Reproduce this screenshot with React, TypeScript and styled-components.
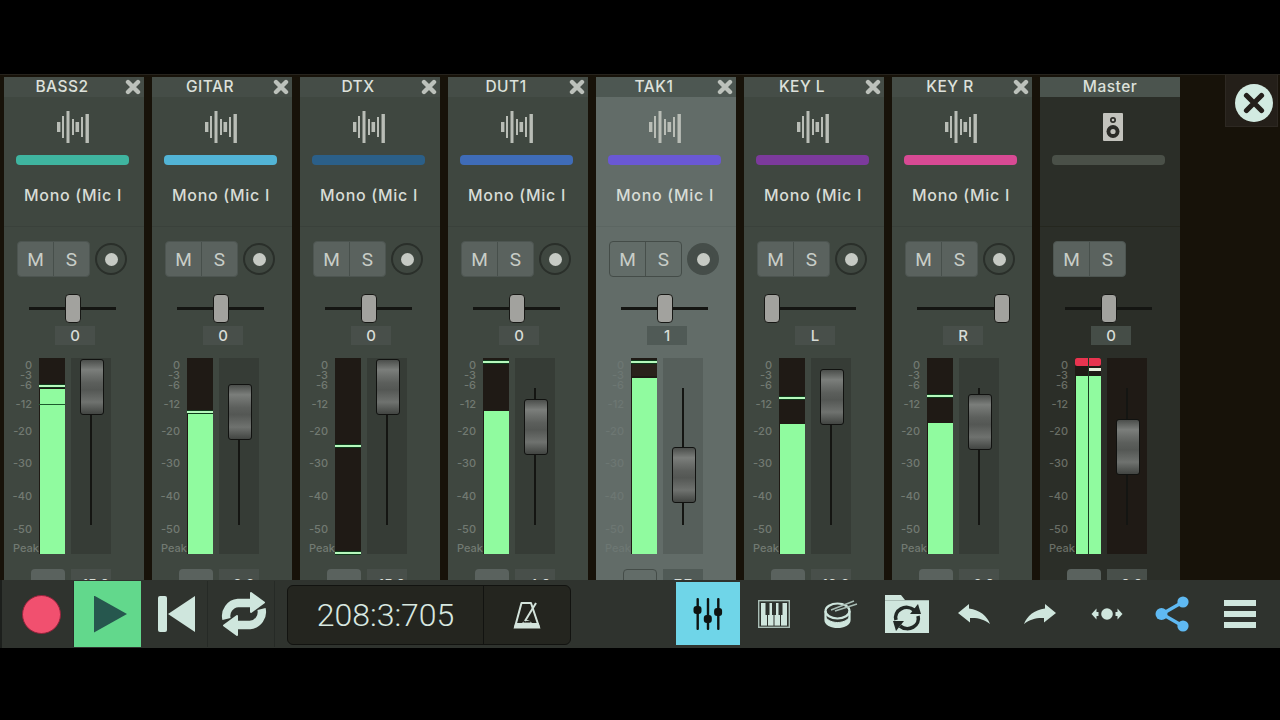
import styled, { createGlobalStyle } from "styled-components";

const GlobalStyle = createGlobalStyle`
  html, body {
    margin: 0;
    padding: 0;
    background: #000;
  }
  * {
    box-sizing: border-box;
  }
`;

type Track = {
  name: string;
  color: string;
  pan: number;
  panText: string;
  level: number;
  peaks: number[];
  thin?: number;
  fader: number;
  gain: string;
  selected?: boolean;
  master?: boolean;
  dark?: boolean;
};

// all meter values are px from the top of the 196px meter
const tracks: Track[] = [
  { name: "BASS2", color: "#3fb5a0", pan: 36, panText: "0", level: 31, peaks: [26], thin: 46, fader: 1, gain: "+15.0" },
  { name: "GITAR", color: "#52b4d6", pan: 36, panText: "0", level: 56, peaks: [52], fader: 26, gain: "+8.6" },
  { name: "DTX", color: "#2b5f88", pan: 36, panText: "0", level: 196, peaks: [86, 193], fader: 1, gain: "+15.0", dark: true },
  { name: "DUT1", color: "#3f6cb8", pan: 36, panText: "0", level: 53, peaks: [2], fader: 41, gain: "+4.0" },
  { name: "TAK1", color: "#6a58d4", pan: 36, panText: "1", level: 20, peaks: [2], fader: 89, gain: "7.7", selected: true },
  { name: "KEY L", color: "#7c3a9c", pan: -5, panText: "L", level: 66, peaks: [38], fader: 11, gain: "+12.6" },
  { name: "KEY R", color: "#d84a94", pan: 77, panText: "R", level: 65, peaks: [36], fader: 36, gain: "+6.0" },
  { name: "Master", color: "#4a5048", pan: 36, panText: "0", level: 18, peaks: [], fader: 61, gain: "+0.0", master: true },
];

const scale = [
  { text: "0", y: 7 },
  { text: "-3", y: 17 },
  { text: "-6", y: 27 },
  { text: "-12", y: 46 },
  { text: "-20", y: 73 },
  { text: "-30", y: 105 },
  { text: "-40", y: 138 },
  { text: "-50", y: 171 },
];

const WaveIcon = () => (
  <svg width="34" height="32" viewBox="0 0 34 32" fill="#b9bdb6">
    <rect x="1" y="11" width="3.4" height="10" />
    <rect x="6" y="5" width="2" height="22" />
    <rect x="10.5" y="0" width="3" height="32" />
    <rect x="16" y="8" width="2" height="16" />
    <rect x="19.5" y="11" width="3.6" height="10" />
    <rect x="25" y="6" width="2" height="20" />
    <rect x="29.5" y="3" width="3.4" height="29" />
  </svg>
);

const SpeakerIcon = () => (
  <svg width="20" height="28" viewBox="0 0 20 28">
    <rect width="20" height="28" rx="1" fill="#c3c3bd" />
    <circle cx="10" cy="7" r="3" fill="#2b2b27" />
    <circle cx="10" cy="7" r="1.3" fill="#c3c3bd" />
    <circle cx="10" cy="18.5" r="6.5" fill="#2b2b27" />
    <circle cx="10" cy="18.5" r="2.6" fill="#c3c3bd" />
  </svg>
);

const CloseIcon = () => (
  <svg width="16" height="16" viewBox="0 0 16 16">
    <path d="M3 3 L13 13 M13 3 L3 13" stroke="#bcc1bb" strokeWidth="4.4" strokeLinecap="round" />
  </svg>
);

const LoopIcon = () => (
  <svg width="46" height="44" viewBox="0 0 46 44" fill="#cfe6dd">
    <path d="M5.5 27 A13 13 0 0 1 17 11 H31" fill="none" stroke="#cfe6dd" strokeWidth="8.4" />
    <path d="M30 1 L43 10.5 L30 20 Z" stroke="#cfe6dd" strokeWidth="2" strokeLinejoin="round" />
    <path d="M40.5 17 A13 13 0 0 1 29 33 H15" fill="none" stroke="#cfe6dd" strokeWidth="8.4" />
    <path d="M16 24 L3 33.5 L16 43 Z" stroke="#cfe6dd" strokeWidth="2" strokeLinejoin="round" />
  </svg>
);

const MetronomeIcon = () => (
  <svg width="30" height="27" viewBox="0 0 30 27">
    <path d="M9.5 1 H19 L27 25 H3 Z" fill="none" stroke="#d4e4dc" strokeWidth="2" strokeLinejoin="round" />
    <path d="M3.5 21 H26.5 L28.5 26.5 H1.5 Z" fill="#d4e4dc" />
    <path d="M10 21 Q15 15 20 21 Z" fill="#d4e4dc" />
    <rect x="11.5" y="19" width="7" height="1.6" fill="#24251f" />
    <path d="M13 19 L24 1" stroke="#d4e4dc" strokeWidth="2" />
  </svg>
);

const MixerIcon = () => (
  <svg width="30" height="32" viewBox="0 0 30 32" fill="#0e1412">
    <rect x="3.5" y="0" width="2.4" height="32" rx="1" />
    <rect x="13.8" y="0" width="2.4" height="32" rx="1" />
    <rect x="24.1" y="0" width="2.4" height="32" rx="1" />
    <rect x="0.5" y="8" width="8" height="8" rx="3" />
    <rect x="10.8" y="17" width="8" height="8" rx="3" />
    <rect x="21.1" y="10" width="8" height="8" rx="3" />
  </svg>
);

const PianoIcon = () => (
  <svg width="32" height="28" viewBox="0 0 32 28">
    <rect x="0.7" y="0.7" width="30.6" height="26.6" fill="#2e332e" stroke="#a9bdb5" strokeWidth="1.4" />
    <rect x="3" y="3" width="26" height="22.6" fill="#cfe6dd" />
    <path d="M9.5 15 V26 M16 15 V26 M22.5 15 V26" stroke="#2e332e" strokeWidth="1" />
    <path d="M7.5 3 H11.5 V15 H7.5 Z M14 3 H18 V15 H14 Z M20.5 3 H24.5 V15 H20.5 Z" fill="#2e332e" />
  </svg>
);

const DrumIcon = () => (
  <svg width="34" height="28" viewBox="0 0 34 28" fill="none" stroke="#cfe6dd">
    <ellipse cx="13.5" cy="11" rx="12" ry="7.5" strokeWidth="2.2" />
    <path d="M1.5 11 V20 C1.5 24 7 27 13.5 27 C20 27 25.5 24 25.5 20 V11" strokeWidth="2.2" />
    <path d="M1.5 17 C4 21 9 22.5 13.5 22.5 C18 22.5 23 21 25.5 17 V21 C24 25 19 27 13.5 27 C8 27 3 25 1.5 21 Z" fill="#cfe6dd" strokeWidth="1" />
    <path d="M7 10 L30 1 M11 11 L33 4" stroke="#a9bdb5" strokeWidth="1.5" />
  </svg>
);

const FolderSyncIcon = () => (
  <svg width="44" height="38" viewBox="0 0 44 38">
    <path d="M0 0 H16 L20 5 H44 V38 H0 Z" fill="#cfe6dd" />
    <path d="M0 5 H44 V6 H0 Z" fill="#a9bdb5" />
    <path d="M11 25 A11 10 0 0 1 29 15" fill="none" stroke="#222926" strokeWidth="3.6" />
    <path d="M25 19 L36 19 L33 9 Z" fill="#222926" />
    <path d="M33 21 A11 10 0 0 1 15 31" fill="none" stroke="#222926" strokeWidth="3.6" />
    <path d="M19 26 L8 26 L11 36 Z" fill="#222926" />
  </svg>
);

const ReplyArrow = ({ flip }: { flip?: boolean }) => (
  <svg width="34" height="22" viewBox="0 0 34 22" fill="#cfe6dd">
    <g transform={flip ? "translate(34 0) scale(-1 1)" : undefined}>
      <path d="M1 10 L12 1 V5.5 C23 7 30 13 33 21 C27 16 20 14.5 13 15 V19.5 Z" />
    </g>
  </svg>
);

const MoveIcon = () => (
  <svg width="32" height="16" viewBox="0 0 32 16" fill="#cfe6dd">
    <circle cx="16" cy="8" r="5.8" />
    <path d="M0.5 8 L5.5 2.5 V13.5 Z" />
    <path d="M31.5 8 L26.5 2.5 V13.5 Z" />
    <rect x="4.5" y="6" width="3" height="4" />
    <rect x="24.5" y="6" width="3" height="4" />
  </svg>
);

const ShareIcon = () => (
  <svg width="36" height="36" viewBox="0 0 36 36" fill="#5fb9f2">
    <path d="M27 6.5 L7 18 L27 29.5" fill="none" stroke="#5fb9f2" strokeWidth="3.4" />
    <circle cx="28" cy="6" r="5.6" />
    <circle cx="6.5" cy="18" r="6" />
    <circle cx="28" cy="30" r="5.6" />
  </svg>
);

const StripView = ({ track }: { track: Track }) => (
  <Strip $selected={track.selected} $master={track.master}>
    <TopPart $selected={track.selected} $master={track.master}>
      <Header $selected={track.selected} $master={track.master}>
        <Name $master={track.master}>{track.name}</Name>
        {!track.master && (
          <CloseSpot>
            <CloseIcon />
          </CloseSpot>
        )}
      </Header>
      <TypeIcon $master={track.master}>{track.master ? <SpeakerIcon /> : <WaveIcon />}</TypeIcon>
      <ColorBar $color={track.color} />
      {!track.master && <InputName>Mono (Mic I</InputName>}
    </TopPart>

    <ButtonRow>
      <MuteGroup $selected={track.selected}>
        <MuteButton>M</MuteButton>
        <MuteButton>S</MuteButton>
      </MuteGroup>
      {!track.master && (
        <RecCircle $selected={track.selected}>
          <RecDot />
        </RecCircle>
      )}
    </ButtonRow>

    <PanRow>
      <PanTrack>
        <PanHandle $left={track.pan} />
      </PanTrack>
    </PanRow>
    <PanValue $selected={track.selected} $master={track.master}>
      {track.panText}
    </PanValue>

    <MeterRow>
      <Scale $selected={track.selected} $master={track.master}>
        {scale.map((s) => (
          <ScaleText key={s.text} $y={s.y}>
            {s.text}
          </ScaleText>
        ))}
        <PeakText>Peak</PeakText>
      </Scale>
      {track.master ? (
        <Meter>
          <MasterClip />
          <MasterPeak />
          <Fill $top={track.level} />
          <MeterSplit />
        </Meter>
      ) : (
        <Meter>
          <Fill $top={track.level} $hidden={track.dark} />
          {track.selected && <DarkBand />}
          {track.peaks.map((p) => (
            <PeakLine key={p} $y={p} />
          ))}
          {track.thin && <ThinLine $y={track.thin} />}
        </Meter>
      )}
      <FaderWell $selected={track.selected} $master={track.master}>
        <FaderLine />
        <FaderHandle $top={track.fader} />
      </FaderWell>
    </MeterRow>

    <GainRow>
      <GainButton $selected={track.selected}>o</GainButton>
      <GainValue $selected={track.selected}>{track.gain}</GainValue>
    </GainRow>
  </Strip>
);

const App = (): JSX.Element => {
  return (
    <>
      <GlobalStyle />
      <Page>
        <Mixer>
          {tracks.map((t) => (
            <StripView key={t.name} track={t} />
          ))}
          <HideButton>
            <HideCircle>
              <svg width="22" height="22" viewBox="0 0 22 22">
                <path d="M3.5 3.5 L18.5 18.5 M18.5 3.5 L3.5 18.5" stroke="#241f1b" strokeWidth="5.2" strokeLinecap="round" />
              </svg>
            </HideCircle>
          </HideButton>
        </Mixer>

        <BottomBar>
          <TransportSlot $shift={3}>
            <RecordDot />
          </TransportSlot>
          <TransportSlot $active>
            <PlayShape />
          </TransportSlot>
          <TransportSlot $shift={5}>
            <SkipBar />
            <SkipShape />
          </TransportSlot>
          <TransportSlot $shift={5}>
            <LoopIcon />
          </TransportSlot>

          <TimeBox>
            <TimeText>208:3:705</TimeText>
            <MetronomeSpot>
              <MetronomeIcon />
            </MetronomeSpot>
          </TimeBox>

          <ToolGroup>
            <ToolSlot $active>
              <MixerIcon />
            </ToolSlot>
            <ToolSlot>
              <PianoIcon />
            </ToolSlot>
            <ToolSlot>
              <DrumIcon />
            </ToolSlot>
            <ToolSlot>
              <FolderSyncIcon />
            </ToolSlot>
            <ToolSlot>
              <ReplyArrow />
            </ToolSlot>
            <ToolSlot>
              <ReplyArrow flip />
            </ToolSlot>
            <ToolSlot>
              <MoveIcon />
            </ToolSlot>
            <ToolSlot>
              <ShareIcon />
            </ToolSlot>
            <ToolSlot>
              <Burger>
                <BurgerLine />
                <BurgerLine />
                <BurgerLine />
              </Burger>
            </ToolSlot>
          </ToolGroup>
        </BottomBar>
      </Page>
    </>
  );
};

const Page = styled.div`
  width: 1280px;
  height: 720px;
  padding-top: 74px;
  background: #000;
  overflow: hidden;
  font-family: "Inter", "Liberation Sans", sans-serif;
`;

const Mixer = styled.div`
  position: relative;
  height: 506px;
  display: flex;
  align-items: flex-start;
  gap: 8px;
  padding: 2px 0 0 4px;
  background: #171209;
  border-top: 1px solid #26231d;
  overflow: hidden;
`;

const Strip = styled.div<{ $selected?: boolean; $master?: boolean }>`
  width: 140px;
  flex-shrink: 0;
  display: flex;
  flex-direction: column;
  background: ${(p) => (p.$selected ? "#626c68" : p.$master ? "#2b2e28" : "#3f4740")};
`;

const TopPart = styled.div<{ $selected?: boolean; $master?: boolean }>`
  height: 150px;
  flex-shrink: 0;
  display: flex;
  flex-direction: column;
  border-bottom: 1px solid
    ${(p) => (p.$selected ? "#5c6662" : p.$master ? "#25271f" : "#3a413b")};
`;

const Header = styled.div<{ $selected?: boolean; $master?: boolean }>`
  position: relative;
  height: 20px;
  flex-shrink: 0;
  display: flex;
  align-items: center;
  justify-content: ${(p) => (p.$master ? "center" : "flex-start")};
  background: ${(p) => (p.$selected ? "#4d5752" : p.$master ? "#4b544e" : "#454d47")};
`;

const Name = styled.div<{ $master?: boolean }>`
  width: ${(p) => (p.$master ? "auto" : "116px")};
  margin-top: -2px;
  text-align: center;
  font-size: 15.5px;
  font-weight: 500;
  letter-spacing: 0.5px;
  color: #dde1db;
`;

const CloseSpot = styled.div`
  position: absolute;
  right: 3px;
  top: 2px;
  width: 16px;
  height: 16px;
  display: flex;
`;

const TypeIcon = styled.div<{ $master?: boolean }>`
  height: 58px;
  flex-shrink: 0;
  display: flex;
  align-items: center;
  justify-content: center;
  padding: 2px ${(p) => (p.$master ? "0" : "2px")} 0 ${(p) => (p.$master ? "6px" : "0")};
`;

const ColorBar = styled.div<{ $color: string }>`
  width: 113px;
  height: 10px;
  margin-left: 12px;
  flex-shrink: 0;
  border-radius: 4px;
  background: ${(p) => p.$color};
`;

const InputName = styled.div`
  margin-top: 20px;
  padding-left: 20px;
  font-size: 16px;
  font-weight: 500;
  line-height: 20px;
  letter-spacing: 0.7px;
  white-space: nowrap;
  color: #d8dcd6;
`;

const ButtonRow = styled.div`
  height: 36px;
  margin-top: 14px;
  padding-left: 13px;
  display: flex;
  align-items: center;
  gap: 5px;
`;

const MuteGroup = styled.div<{ $selected?: boolean }>`
  width: 73px;
  height: 36px;
  display: flex;
  border-radius: 4px;
  overflow: hidden;
  background: ${(p) => (p.$selected ? "#626c68" : "#5a625e")};
  border: 1px solid ${(p) => (p.$selected ? "#444c48" : "#4d5551")};
`;

const MuteButton = styled.div`
  flex: 1;
  display: flex;
  align-items: center;
  justify-content: center;
  font-family: "Roboto", "Liberation Sans", sans-serif;
  font-size: 19px;
  font-weight: 400;
  color: #c8cdc7;
  & + & {
    border-left: 1px solid #474f4b;
  }
`;

const RecCircle = styled.div<{ $selected?: boolean }>`
  width: 32px;
  height: 32px;
  display: flex;
  align-items: center;
  justify-content: center;
  border-radius: 50%;
  border: ${(p) => (p.$selected ? "6px solid #454d49" : "2px solid #2a2f2a")};
  background: ${(p) => (p.$selected ? "#454d49" : "#3f4740")};
`;

const RecDot = styled.div`
  width: 13px;
  height: 13px;
  border-radius: 50%;
  background: #c6cac4;
`;

const PanRow = styled.div`
  height: 29px;
  margin-top: 17px;
  padding-left: 25px;
  display: flex;
  align-items: center;
`;

const PanTrack = styled.div`
  position: relative;
  width: 87px;
  height: 3px;
  background: #141512;
`;

const PanHandle = styled.div<{ $left: number }>`
  position: absolute;
  left: ${(p) => p.$left}px;
  top: -13px;
  width: 16px;
  height: 29px;
  border-radius: 4px;
  border: 1px solid #171815;
  background: #a2a29e;
`;

const PanValue = styled.div<{ $selected?: boolean; $master?: boolean }>`
  width: 40px;
  height: 19px;
  margin: 3px 0 0 51px;
  display: flex;
  align-items: center;
  justify-content: center;
  font-size: 15px;
  font-weight: 500;
  color: #d8dcd6;
  background: ${(p) => (p.$selected ? "#505a56" : p.$master ? "#454d47" : "#484f4a")};
`;

const MeterRow = styled.div`
  height: 196px;
  margin-top: 13px;
  display: flex;
  flex-shrink: 0;
`;

const Scale = styled.div<{ $selected?: boolean; $master?: boolean }>`
  position: relative;
  width: 35px;
  flex-shrink: 0;
  color: ${(p) => (p.$selected ? "#6d7773" : p.$master ? "#6a6e66" : "#727a72")};
`;

const ScaleText = styled.div<{ $y: number }>`
  position: absolute;
  right: 7px;
  top: ${(p) => p.$y - 5}px;
  font-size: 11px;
  line-height: 10px;
  font-weight: 500;
`;

const PeakText = styled.div`
  position: absolute;
  left: 9px;
  top: 185px;
  font-size: 11px;
  line-height: 10px;
  font-weight: 500;
`;

const Meter = styled.div`
  position: relative;
  width: 26px;
  flex-shrink: 0;
  background: #1f1a15;
`;

const Fill = styled.div<{ $top: number; $hidden?: boolean }>`
  position: absolute;
  left: 1px;
  right: 0;
  bottom: 0;
  top: ${(p) => p.$top}px;
  display: ${(p) => (p.$hidden ? "none" : "block")};
  background: #90fb9f;
`;

const PeakLine = styled.div<{ $y: number }>`
  position: absolute;
  left: 0;
  right: 0;
  top: ${(p) => p.$y}px;
  height: 4px;
  background: #b6f8bc;
  border-top: 1px solid #0d3a1a;
  border-bottom: 1px solid #0d3a1a;
`;

const ThinLine = styled.div<{ $y: number }>`
  position: absolute;
  left: 0;
  right: 0;
  top: ${(p) => p.$y}px;
  height: 1px;
  background: #1c5a2c;
`;

const DarkBand = styled.div`
  position: absolute;
  left: 1px;
  right: 0;
  top: 6px;
  height: 12px;
  background: #2a211b;
`;

const MasterClip = styled.div`
  position: absolute;
  left: 0;
  right: 0;
  top: 0;
  height: 8px;
  border-radius: 2px;
  background: #e8344f;
`;

const MasterPeak = styled.div`
  position: absolute;
  right: 0;
  top: 10px;
  width: 12px;
  height: 3px;
  background: #e8eedd;
`;

const MeterSplit = styled.div`
  position: absolute;
  left: 13px;
  top: 0;
  bottom: 0;
  width: 1px;
  background: #1a3a22;
`;

const FaderWell = styled.div<{ $selected?: boolean; $master?: boolean }>`
  position: relative;
  width: 40px;
  margin-left: 6px;
  flex-shrink: 0;
  background: ${(p) => (p.$selected ? "#565f5b" : p.$master ? "#1f1a15" : "#363c36")};
`;

const FaderLine = styled.div`
  position: absolute;
  left: 19px;
  top: 30px;
  width: 2px;
  height: 137px;
  background: #141512;
`;

const FaderHandle = styled.div<{ $top: number }>`
  position: absolute;
  left: 9px;
  top: ${(p) => p.$top}px;
  width: 24px;
  height: 56px;
  border-radius: 3px;
  border: 1px solid #111210;
  background: linear-gradient(
    #4b4e4b 0%,
    #7b7e7b 18%,
    #5c5f5c 42%,
    #545754 55%,
    #6f726f 78%,
    #424542 100%
  );
`;

const GainRow = styled.div`
  height: 30px;
  margin-top: 15px;
  padding-left: 27px;
  display: flex;
  gap: 6px;
`;

const GainButton = styled.div<{ $selected?: boolean }>`
  width: 34px;
  text-align: center;
  padding-top: 6px;
  font-size: 14px;
  font-weight: 500;
  border-radius: 4px 4px 0 0;
  color: #d8dcd6;
  background: ${(p) => (p.$selected ? "#626c68" : "#5a625e")};
  border: 1px solid ${(p) => (p.$selected ? "#444c48" : "transparent")};
`;

const GainValue = styled.div<{ $selected?: boolean }>`
  width: 40px;
  text-align: center;
  padding-top: 7px;
  font-size: 14px;
  font-weight: 500;
  white-space: nowrap;
  color: #d8dcd6;
  background: ${(p) => (p.$selected ? "#505a56" : "#484f4a")};
`;

const HideButton = styled.div`
  position: absolute;
  left: 1225px;
  top: -1px;
  width: 53px;
  height: 53px;
  display: flex;
  align-items: center;
  justify-content: center;
  padding: 5px 0 0 5px;
  background: #241f19;
  border: 1px solid #2d2822;
`;

const HideCircle = styled.div`
  width: 38px;
  height: 38px;
  flex-shrink: 0;
  display: flex;
  align-items: center;
  justify-content: center;
  border-radius: 50%;
  background: #d2eae1;
`;

const BottomBar = styled.div`
  height: 68px;
  display: flex;
  align-items: flex-start;
  padding-left: 5px;
  background: #2f332e;
  border-left: 2px solid #1c1f1c;
`;

const TransportSlot = styled.div<{ $active?: boolean; $shift?: number }>`
  width: 67px;
  height: 66px;
  margin-top: 1px;
  padding-left: ${(p) => p.$shift || 0}px;
  display: flex;
  align-items: center;
  justify-content: center;
  gap: 1px;
  flex-shrink: 0;
  background: ${(p) => (p.$active ? "#62d88c" : "transparent")};
  border-right: 1px solid ${(p) => (p.$active ? "#62d88c" : "#262a26")};
`;

const RecordDot = styled.div`
  width: 39px;
  height: 39px;
  border-radius: 50%;
  background: #f1506f;
  border: 1px solid #96233c;
`;

const PlayShape = styled.div`
  width: 33px;
  height: 37px;
  margin-left: 7px;
  background: #26574e;
  clip-path: polygon(0 0, 100% 50%, 0 100%);
`;

const SkipBar = styled.div`
  width: 9px;
  height: 36px;
  border-radius: 2px;
  background: #cfe6dd;
`;

const SkipShape = styled.div`
  width: 27px;
  height: 36px;
  background: #cfe6dd;
  clip-path: polygon(100% 0, 0 50%, 100% 100%);
`;

const TimeBox = styled.div`
  width: 284px;
  height: 60px;
  margin: 5px 0 0 12px;
  display: flex;
  flex-shrink: 0;
  border-radius: 6px;
  background: #24251f;
  border: 1px solid #121310;
`;

const TimeText = styled.div`
  width: 196px;
  display: flex;
  align-items: center;
  justify-content: center;
  font-family: "Roboto", "Liberation Sans", sans-serif;
  font-size: 32px;
  font-weight: 300;
  color: #d8e8e0;
  border-right: 1px solid #121310;
`;

const MetronomeSpot = styled.div`
  flex: 1;
  display: flex;
  align-items: center;
  justify-content: center;
`;

const ToolGroup = styled.div`
  margin-left: auto;
  padding-right: 7px;
  display: flex;
`;

const ToolSlot = styled.div<{ $active?: boolean }>`
  width: ${(p) => (p.$active ? "64.5px" : "66.5px")};
  height: 63px;
  margin: ${(p) => (p.$active ? "2px 1px 0" : "2px 0 0")};
  display: flex;
  align-items: center;
  justify-content: center;
  background: ${(p) => (p.$active ? "#6fd5e8" : "transparent")};
`;

const Burger = styled.div`
  width: 32px;
  display: flex;
  flex-direction: column;
  gap: 5px;
`;

const BurgerLine = styled.div`
  height: 6px;
  background: #cfe6dd;
`;

export default App;
